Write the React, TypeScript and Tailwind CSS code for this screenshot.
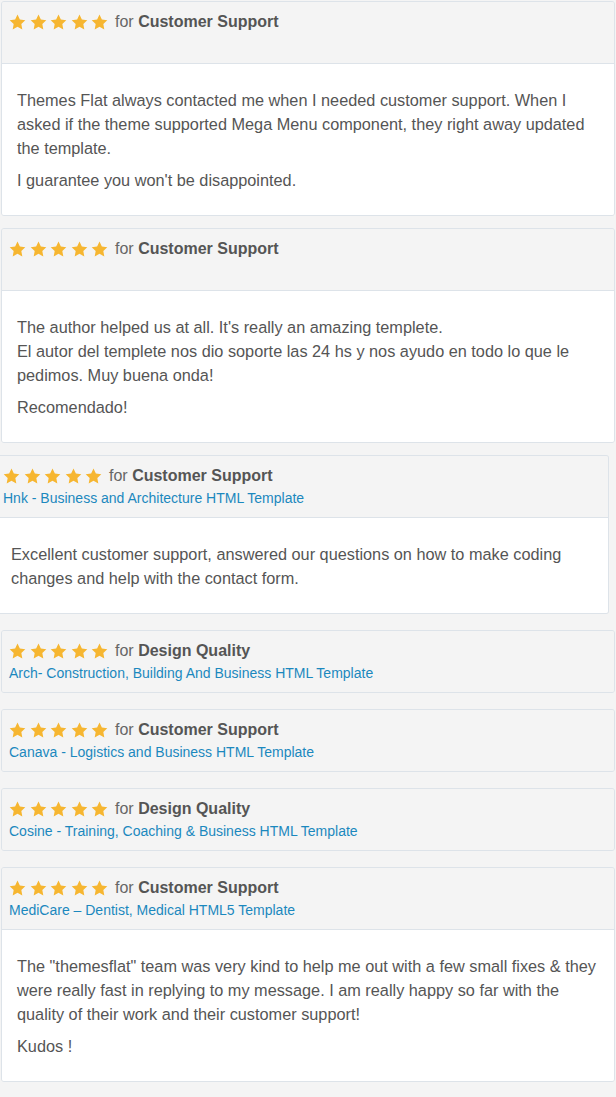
import React from "react";

type Review = {
  category: string;
  product?: string;
  body?: string[];
  shifted?: boolean;
  top: string;
};

const reviews: Review[] = [
  {
    category: "Customer Support",
    top: "mt-0",
    body: [
      "Themes Flat always contacted me when I needed customer support. When I asked if the theme supported Mega Menu component, they right away updated the template.",
      "I guarantee you won't be disappointed.",
    ],
  },
  {
    category: "Customer Support",
    top: "mt-[12px]",
    body: [
      "The author helped us at all. It's really an amazing templete.\nEl autor del templete nos dio soporte las 24 hs y nos ayudo en todo lo que le pedimos. Muy buena onda!",
      "Recomendado!",
    ],
  },
  {
    category: "Customer Support",
    top: "mt-[12px]",
    product: "Hnk - Business and Architecture HTML Template",
    body: [
      "Excellent customer support, answered our questions on how to make coding changes and help with the contact form.",
    ],
    shifted: true,
  },
  {
    category: "Design Quality",
    top: "mt-[16px]",
    product: "Arch- Construction, Building And Business HTML Template",
  },
  {
    category: "Customer Support",
    top: "mt-[16px]",
    product: "Canava - Logistics and Business HTML Template",
  },
  {
    category: "Design Quality",
    top: "mt-[16px]",
    product: "Cosine - Training, Coaching & Business HTML Template",
  },
  {
    category: "Customer Support",
    top: "mt-[16px]",
    product: "MediCare \u2013 Dentist, Medical HTML5 Template",
    body: [
      'The "themesflat" team was very kind to help me out with a few small fixes & they were really fast in replying to my message. I am really happy so far with the quality of their work and their customer support!',
      "Kudos !",
    ],
  },
];

const Star = () => (
  <svg width="17" height="16" viewBox="0 0 24 23" className="shrink-0">
    <path
      d="M12 0.8l3.4 7.2 7.8 1-5.7 5.4 1.4 7.8L12 18.4l-6.9 3.8 1.4-7.8L0.8 9l7.8-1z"
      fill="#f6b631"
    />
  </svg>
);

const Card = ({ review }: { review: Review }) => {
  return (
    <div
      className={
        review.top +
        " border border-[#dde3e9] rounded-[3px] overflow-hidden " +
        (review.shifted ? "-ml-[5px] mr-[6px] border-l-0" : "")
      }
    >
      <div className="bg-[#f4f4f4] pl-[7px] pr-3 pt-[9px] pb-[8px]">
        <div className="flex items-center h-[22px]">
          <div className="flex items-center gap-[3.5px]">
            <Star />
            <Star />
            <Star />
            <Star />
            <Star />
          </div>
          <span className="ml-[7px] text-[16px] text-[#666]">
            for <b className="font-bold text-[#555]">{review.category}</b>
          </span>
        </div>
        <div className="h-[22px] flex items-center text-[14px] text-[#1b88be]">
          {review.product}
        </div>
      </div>
      {review.body && (
        <div className="bg-white border-t border-[#dde3e9] px-[15px] pt-[24px] pb-[23px] text-[16.3px] leading-[24px] text-[#555]">
          {review.body.map((p, i) => (
            <p key={i} className={"whitespace-pre-line " + (i > 0 ? "mt-[8px]" : "")}>
              {p}
            </p>
          ))}
        </div>
      )}
    </div>
  );
};

export default function App() {
  return (
    <div
      className="min-h-screen bg-[#f4f4f4] pt-px pl-px pr-px flex flex-col"
      style={{ fontFamily: '"Liberation Sans", Arial, sans-serif' }}
    >
      {reviews.map((r, i) => (
        <Card key={i} review={r} />
      ))}
    </div>
  );
}
